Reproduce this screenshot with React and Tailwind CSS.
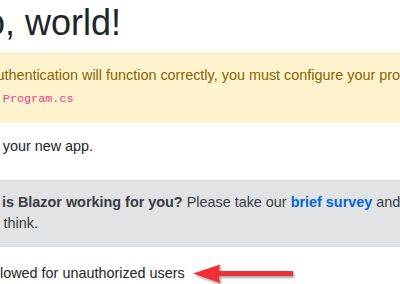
import React from 'react'
import { Pencil } from 'lucide-react'

function Arrow() {
  // red annotation arrow pointing left, with a soft shadow
  return (
    <svg width="106" height="26" viewBox="0 0 106 26" className="ml-[7px] shrink-0">
      <defs>
        <filter id="arrowShadow" x="-10%" y="-40%" width="130%" height="200%">
          <feDropShadow dx="1.5" dy="2" stdDeviation="1" floodColor="#000" floodOpacity="0.35" />
        </filter>
      </defs>
      <g filter="url(#arrowShadow)" fill="#ef2f36">
        <path d="M1 12.5 L28 3.5 Q26 12.5 28 22 Z" />
        <rect x="25" y="10" width="76" height="5" />
      </g>
    </svg>
  )
}

export default function App() {
  return (
    <div className="w-[400px] h-[284px] overflow-hidden bg-white font-['Liberation_Sans',Arial,sans-serif] text-[#212529] text-[14.4px] leading-[21.6px]">
      <div className="-ml-[77px] w-[620px]">
        <h1 className="mt-[1px] mb-[9px] text-[36px] leading-[43px] font-normal whitespace-nowrap">
          Hello, world!
        </h1>

        {/* auth warning */}
        <div className="border border-[#ffeeba] bg-[#fff3cd] text-[#856404] px-[18px] py-[11px] mb-[14px]">
          <div className="whitespace-nowrap">
            Before authentication will function correctly, you must configure your provider
          </div>
          <div className="whitespace-nowrap">
            details in{' '}
            <code className="font-['Liberation_Mono',monospace] text-[11.8px] text-[#e83e8c]">Program.cs</code>
          </div>
        </div>

        <p className="mb-[22px] whitespace-nowrap">Welcome to your new app.</p>

        {/* survey prompt */}
        <div className="border border-[#d6d8db] bg-[#e2e3e5] text-[#383d41] px-[18px] py-[11px] mb-[14px]">
          <div className="whitespace-nowrap">
            <span className="inline-block w-[14.4px] mr-[7.2px] align-middle">
              <Pencil size={13} />
            </span>{' '}
            <strong className="font-bold">How is Blazor working for you?</strong> Please take our{' '}
            <a href="#" className="font-bold text-[#0366d6]">brief survey</a> and tell us
          </div>
          <div className="whitespace-nowrap">what you think.</div>
        </div>

        <div className="flex items-center whitespace-nowrap -ml-[3px]">
          <span>Content is allowed for unauthorized users</span>
          <Arrow />
        </div>
      </div>
    </div>
  )
}
